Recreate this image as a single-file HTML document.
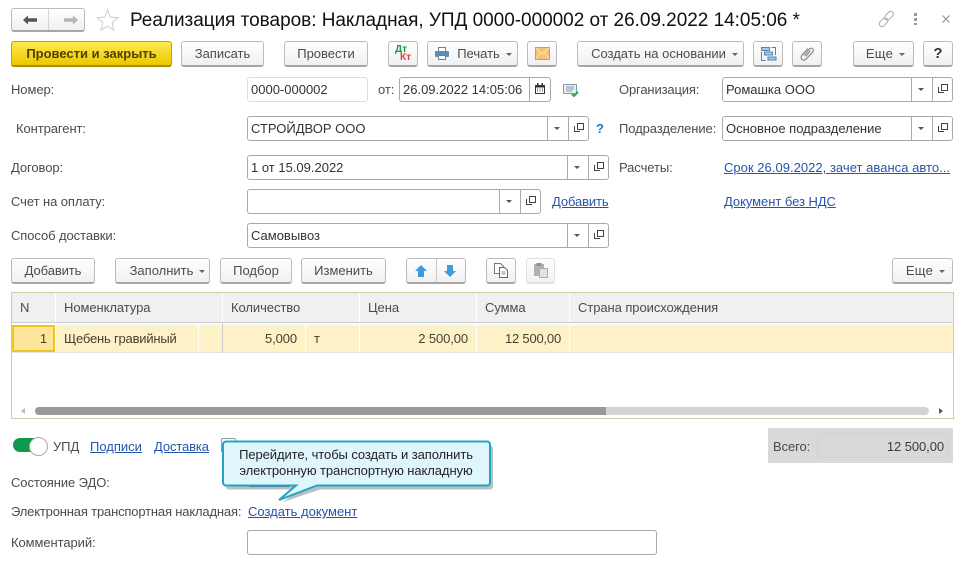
<!DOCTYPE html>
<html lang="ru"><head><meta charset="utf-8"><title>Реализация товаров</title>
<style>
html,body{margin:0;padding:0;background:#fff}
#p{position:relative;width:965px;height:565px;overflow:hidden;background:#fff;font:13px/15px "Liberation Sans",Arial,sans-serif;color:#4a4a4a}
#p>*{position:absolute}
.b{box-sizing:border-box;height:26px;top:41px;border:1px solid #bcbcbc;border-bottom:2px solid #a6a6a6;border-radius:3px;background:linear-gradient(#fff,#f0f0f0);text-align:center;line-height:24px;color:#4c4c4c;white-space:nowrap}
.r{top:258px}
.y{background:linear-gradient(#ffe94d,#ecc800);border-color:#c2a500;border-bottom-color:#a68e00;font-weight:bold;color:#4f4100}
.a{display:inline-block;width:0;height:0;border:3px solid transparent;border-top:3px solid #666;border-bottom:0;vertical-align:2px;margin-left:6px}
.l{white-space:nowrap;color:#4d4a4a;letter-spacing:-.08px}
.f{box-sizing:border-box;height:25px;border:1px solid #a9a9a9;border-radius:3px;background:#fff;line-height:23px;padding-left:3px;color:#333;white-space:nowrap}
.d{position:absolute;top:0;width:1px;height:23px;background:#a9a9a9}
.dd{position:absolute;top:10px;width:0;height:0;border:3px solid transparent;border-top:3px solid #555;border-bottom:0}
.o{position:absolute;top:6px;width:5px;height:5px;border:1px solid #444;background:#fff}
.o2{position:absolute;top:9px;width:5px;height:5px;border-left:1px solid #444;border-bottom:1px solid #444}
.k{color:#2554ac;text-decoration:underline;white-space:nowrap}
.h{top:293px;height:29px;background:#f0f0f0;line-height:29px;padding-left:8px;box-sizing:border-box;color:#4d4a4a;white-space:nowrap;letter-spacing:-.07px}
.c{top:325px;height:27px;background:#fdf1c7;line-height:27px;box-sizing:border-box;color:#4a4030;white-space:nowrap;letter-spacing:-.1px}
svg{display:block}
</style></head><body><div id="p">

<!-- nav -->
<div class="b" style="left:11px;top:8px;width:74px;height:24px"></div>
<div style="left:48px;top:9px;width:1px;height:21px;background:#d4d4d4"></div>
<svg style="left:22px;top:14px" width="60" height="12"><path d="M1 6l5-4.500V4.300h9v3.400H6v2.800z" fill="#555"/><path d="M51 1.500L56 6l-5 4.500V7.700h-9V4.300h9z" fill="#b5b5b5"/></svg>
<svg style="left:95px;top:8px" width="25" height="24"><path d="M12.500 2l2.800 7 7.700.6-5.900 5 1.900 7.600-6.500-4.100-6.500 4.100 1.900-7.600-5.900-5 7.700-.6z" fill="#fff" stroke="#c9ced2"/></svg>
<div style="left:130px;top:10px;font-size:19px;line-height:22px;color:#111;white-space:nowrap;letter-spacing:-.03px">Реализация товаров: Накладная, УПД 0000-000002 от 26.09.2022 14:05:06 *</div>
<svg style="left:877px;top:10px" width="20" height="18"><g fill="none" stroke="#a8a8a8"><rect x="1.500" y="9.500" width="10" height="5.500" rx="2.700" transform="rotate(-45 6.500 12.200)"/><rect x="7" y="3" width="10" height="5.500" rx="2.700" transform="rotate(-45 12 5.700)"/></g></svg>
<svg style="left:913px;top:12px" width="6" height="14"><g fill="#999"><rect x="1" y="1" width="3" height="3"/><rect x="1" y="6" width="3" height="3"/><rect x="1" y="11" width="3" height="2"/></g></svg>
<svg style="left:941px;top:14px" width="11" height="11"><path d="M1.500 1.500l7 7M8.500 1.500l-7 7" stroke="#8a8a8a"/></svg>

<!-- toolbar -->
<div class="b y" style="left:11px;width:161px">Провести и закрыть</div>
<div class="b" style="left:181px;width:83px">Записать</div>
<div class="b" style="left:284px;width:84px">Провести</div>
<div class="b" style="left:388px;width:30px"></div>
<div style="left:395px;top:45px;font-size:10px;line-height:10px;font-weight:bold;color:#1a9a3c">Дт</div>
<div style="left:400px;top:53px;font-size:10px;line-height:10px;font-weight:bold;color:#e0403c">Кт</div>
<div class="b" style="left:427px;width:91px;padding-left:24px">Печать<span class="a"></span></div>
<svg style="left:434px;top:46px" width="16" height="15"><rect x="4.500" y="1.500" width="7" height="4" fill="#fff" stroke="#5b87aa"/><rect x="1" y="5" width="14" height="6" rx="1" fill="#5e8db3"/><rect x="4.500" y="9.500" width="7" height="4" fill="#fff" stroke="#5b87aa"/></svg>
<div class="b" style="left:527px;width:30px"></div>
<svg style="left:535px;top:47px" width="15" height="13"><rect x=".5" y=".5" width="14" height="12" fill="#f6c272" stroke="#d89a3e"/><path d="M1 1l6.500 6L14 1M1 12l4.500-6.500M14 12L9.500 5.500" fill="none" stroke="#fbe3b5"/></svg>
<div class="b" style="left:577px;width:167px;padding-left:8px">Создать на основании<span class="a"></span></div>
<div class="b" style="left:753px;width:30px"></div>
<svg style="left:760px;top:46px" width="17" height="16"><g fill="#a9cbe6" stroke="#4e86b5"><rect x="1.500" y="1.500" width="8" height="3"/><rect x="4.500" y="6" width="8" height="3"/><rect x="8" y="11" width="8" height="3"/></g><path d="M1.500 6v8.500h4M15.500 9V1.500h-4" fill="none" stroke="#4e86b5"/></svg>
<div class="b" style="left:792px;width:30px"></div>
<svg style="left:800px;top:46px" width="15" height="15"><path d="M4 9.500l5.500-6.500a2.200 2.200 0 0 1 3.300 3L6 13.200a2.800 2.800 0 0 1-4.200-3.800L8 2.500M5.500 10.500l5-5.800" fill="none" stroke="#8a8a8a" stroke-width="1.200"/></svg>
<div class="b" style="left:853px;width:61px;padding-left:4px;letter-spacing:.3px">Еще<span class="a"></span></div>
<div class="b" style="left:923px;width:30px;font-weight:bold;font-size:15px;color:#333">?</div>

<!-- left labels -->
<div class="l" style="left:11px;top:82px">Номер:</div>
<div class="l" style="left:16px;top:121px">Контрагент:</div>
<div class="l" style="left:11px;top:160px">Договор:</div>
<div class="l" style="left:11px;top:194px">Счет на оплату:</div>
<div class="l" style="left:11px;top:228px">Способ доставки:</div>

<!-- fields -->
<div class="f" style="left:247px;top:77px;width:121px;border-color:#ddd">0000-000002</div>
<div class="l" style="left:378px;top:82px">от:</div>
<div class="f" style="left:399px;top:77px;width:152px">26.09.2022 14:05:06<i class="d" style="left:129px"></i>
<svg style="position:absolute;left:134px;top:5px" width="12" height="12"><rect x="1.500" y="2.500" width="9" height="8" fill="#fff" stroke="#333"/><rect x="1" y="2" width="10" height="2.500" fill="#333"/><rect x="3" y="0" width="1.500" height="3" fill="#333"/><rect x="7.500" y="0" width="1.500" height="3" fill="#333"/><path d="M3 6h1M5.500 6h1M8 6h1M3 8h1M5.500 8h1M8 8h1" stroke="#333"/></svg></div>
<svg style="left:563px;top:84px" width="18" height="14"><rect x=".5" y=".5" width="13" height="9" fill="#e8eef2" stroke="#7d9cb0"/><path d="M3 3h8M3 5h8M3 7h6" stroke="#7d9cb0"/><path d="M9 10l2 2 4-4" fill="none" stroke="#2fa84f" stroke-width="2"/></svg>

<div class="f" style="left:247px;top:116px;width:342px">СТРОЙДВОР ООО<i class="d" style="left:299px"></i><i class="dd" style="left:306px"></i><i class="d" style="left:320px"></i><i class="o" style="left:329px"></i><i class="o2" style="left:326px"></i></div>
<div style="left:596px;top:121px;color:#1b7fc4;font-weight:bold">?</div>
<div class="f" style="left:247px;top:155px;width:362px">1 от 15.09.2022<i class="d" style="left:319px"></i><i class="dd" style="left:326px"></i><i class="d" style="left:340px"></i><i class="o" style="left:349px"></i><i class="o2" style="left:346px"></i></div>
<div class="f" style="left:247px;top:189px;width:294px"><i class="d" style="left:251px"></i><i class="dd" style="left:258px"></i><i class="d" style="left:272px"></i><i class="o" style="left:281px"></i><i class="o2" style="left:278px"></i></div>
<a class="k" style="left:552px;top:194px;letter-spacing:-.12px">Добавить</a>
<div class="f" style="left:247px;top:223px;width:362px">Самовывоз<i class="d" style="left:319px"></i><i class="dd" style="left:326px"></i><i class="d" style="left:340px"></i><i class="o" style="left:349px"></i><i class="o2" style="left:346px"></i></div>

<!-- right -->
<div class="l" style="left:619px;top:82px;letter-spacing:-.15px">Организация:</div>
<div class="f" style="left:722px;top:77px;width:231px">Ромашка ООО<i class="d" style="left:188px"></i><i class="dd" style="left:195px"></i><i class="d" style="left:209px"></i><i class="o" style="left:218px"></i><i class="o2" style="left:215px"></i></div>
<div class="l" style="left:619px;top:121px">Подразделение:</div>
<div class="f" style="left:722px;top:116px;width:231px">Основное подразделение<i class="d" style="left:188px"></i><i class="dd" style="left:195px"></i><i class="d" style="left:209px"></i><i class="o" style="left:218px"></i><i class="o2" style="left:215px"></i></div>
<div class="l" style="left:619px;top:160px">Расчеты:</div>
<a class="k" style="left:724px;top:160px;letter-spacing:.03px">Срок 26.09.2022, зачет аванса авто...</a>
<a class="k" style="left:724px;top:194px;letter-spacing:-.05px">Документ без НДС</a>

<!-- table buttons -->
<div class="b r" style="left:11px;width:84px;letter-spacing:-.1px">Добавить</div>
<div class="b r" style="left:115px;width:95px;padding-left:10px">Заполнить<span class="a"></span></div>
<div class="b r" style="left:220px;width:72px">Подбор</div>
<div class="b r" style="left:301px;width:85px">Изменить</div>
<div class="b r" style="left:406px;width:60px"></div>
<div style="left:436px;top:259px;width:1px;height:23px;background:#c8c8c8"></div>
<svg style="left:415px;top:264px" width="44" height="14"><path d="M6 1l6 6H9v6H3V7H0z" fill="#3d9be0"/><path d="M32 1h6v6h3l-6 6-6-6h3z" fill="#3d9be0"/></svg>
<div class="b r" style="left:486px;width:30px"></div>
<svg style="left:493px;top:262px" width="17" height="17"><path d="M1.500 1.500h6l3 3v7h-9z" fill="#fff" stroke="#777"/><path d="M6.500 5.500h5l3 3v7h-8z" fill="#fff" stroke="#666"/><path d="M8.500 10h4M8.500 12h4" stroke="#888"/></svg>
<div class="b r" style="left:526px;width:29px;border-color:#ddd;opacity:.9"></div>
<svg style="left:533px;top:262px" width="16" height="17"><rect x="1" y="2" width="10" height="12" fill="#b5b0a8"/><rect x="3.500" y="1" width="5" height="3" fill="#8f8f8f"/><rect x="6.500" y="6.500" width="8" height="9" fill="#e0e3e6" stroke="#a8aeb3"/></svg>
<div class="b r" style="left:892px;width:61px;padding-left:6px;letter-spacing:.3px">Еще<span class="a"></span></div>

<!-- table -->
<div style="left:11px;top:292px;width:943px;height:127px;box-sizing:border-box;border:1px solid #d4c9a6;background:#fff"></div>
<div class="h" style="left:12px;width:43px;">N</div>
<div class="h" style="left:56px;width:166px">Номенклатура</div>
<div class="h" style="left:223px;width:136px">Количество</div>
<div class="h" style="left:360px;width:116px">Цена</div>
<div class="h" style="left:477px;width:92px">Сумма</div>
<div class="h" style="left:570px;width:383px">Страна происхождения</div>
<div style="left:12px;top:322px;width:941px;height:1px;background:#ccc"></div>
<div style="left:12px;top:352px;width:941px;height:1px;background:#e4e4e4"></div>
<div class="c" style="left:12px;width:43px;background:#fde69a;border:2px solid #f2c21f;text-align:right;padding-right:6px;line-height:23px;">1</div>
<div class="c" style="left:56px;width:142px;padding-left:8px;letter-spacing:-.2px">Щебень гравийный</div>
<div class="c" style="left:199px;width:23px"></div>
<div class="c" style="left:223px;width:82px;text-align:right;padding-right:8px">5,000</div>
<div class="c" style="left:306px;width:53px;padding-left:8px">т</div>
<div class="c" style="left:360px;width:116px;text-align:right;padding-right:8px">2 500,00</div>
<div class="c" style="left:477px;width:92px;text-align:right;padding-right:8px;letter-spacing:-.2px">12 500,00</div>
<div class="c" style="left:570px;width:383px"></div>
<div style="left:222px;top:323px;width:1px;height:30px;background:#ccc"></div>
<!-- scrollbar -->
<div style="left:35px;top:407px;width:894px;height:8px;border-radius:4px;background:#d4d4d4"></div>
<div style="left:35px;top:407px;width:571px;height:8px;border-radius:4px 0 0 4px;background:#9a9a9a"></div>
<svg style="left:20px;top:407px" width="6" height="8"><path d="M5 1L1 4l4 3z" fill="#bbb"/></svg>
<svg style="left:938px;top:407px" width="6" height="8"><path d="M1 1l4 3-4 3z" fill="#555"/></svg>

<!-- bottom -->
<div style="left:13px;top:438px;width:24px;height:14px;border-radius:7px 0 0 7px;background:#0f9a4b"></div>
<div style="left:29px;top:437px;width:17px;height:17px;border-radius:50%;background:#fff;border:1px solid #aaa"></div>
<div class="l" style="left:53px;top:439px">УПД</div>
<a class="k" style="left:90px;top:439px">Подписи</a>
<a class="k" style="left:154px;top:439px;letter-spacing:-.12px">Доставка</a>
<div style="left:221px;top:438px;width:15px;height:15px;box-sizing:border-box;border:1px solid #999;border-radius:2px"></div>
<div class="l" style="left:11px;top:475px">Состояние ЭДО:</div>
<div style="left:249px;top:486px;width:40px;height:1px;background:#2554ac"></div>
<div class="l" style="left:11px;top:504px;letter-spacing:-.17px">Электронная транспортная накладная:</div>
<a class="k" style="left:248px;top:504px">Создать документ</a>
<div class="l" style="left:11px;top:535px">Комментарий:</div>
<div class="f" style="left:247px;top:530px;width:410px"></div>

<!-- total -->
<div style="left:768px;top:428px;width:185px;height:35px;background:#d9d9d9"></div>
<div style="left:817px;top:433px;width:131px;height:25px;box-sizing:border-box;border:1px solid #d2d2d2;border-radius:3px"></div>
<div class="l" style="left:773px;top:439px">Всего:</div>
<div class="l" style="left:800px;width:144px;top:439px;text-align:right;color:#3c3c3c">12 500,00</div>

<!-- tooltip -->
<svg style="left:220px;top:438px" width="280" height="66"><path d="M6 4.500h261a3 3 0 0 1 3 3v38a3 3 0 0 1-3 3H97L60 61l17-12.500H6a3 3 0 0 1-3-3v-38a3 3 0 0 1 3-3z" fill="#7d8c90" opacity=".55" transform="translate(3 3)"/><path d="M6 3.500h261a3 3 0 0 1 3 3v38a3 3 0 0 1-3 3H97L59 62l17-14.500H6a3 3 0 0 1-3-3v-38a3 3 0 0 1 3-3z" fill="#dff6fd" stroke="#22a5c2" stroke-width="2"/></svg>
<div style="left:224px;top:447px;width:264px;text-align:center;color:#222;line-height:16px;white-space:nowrap;letter-spacing:-.08px">Перейдите, чтобы создать и заполнить<br>электронную транспортную накладную</div>
</div></body></html>
